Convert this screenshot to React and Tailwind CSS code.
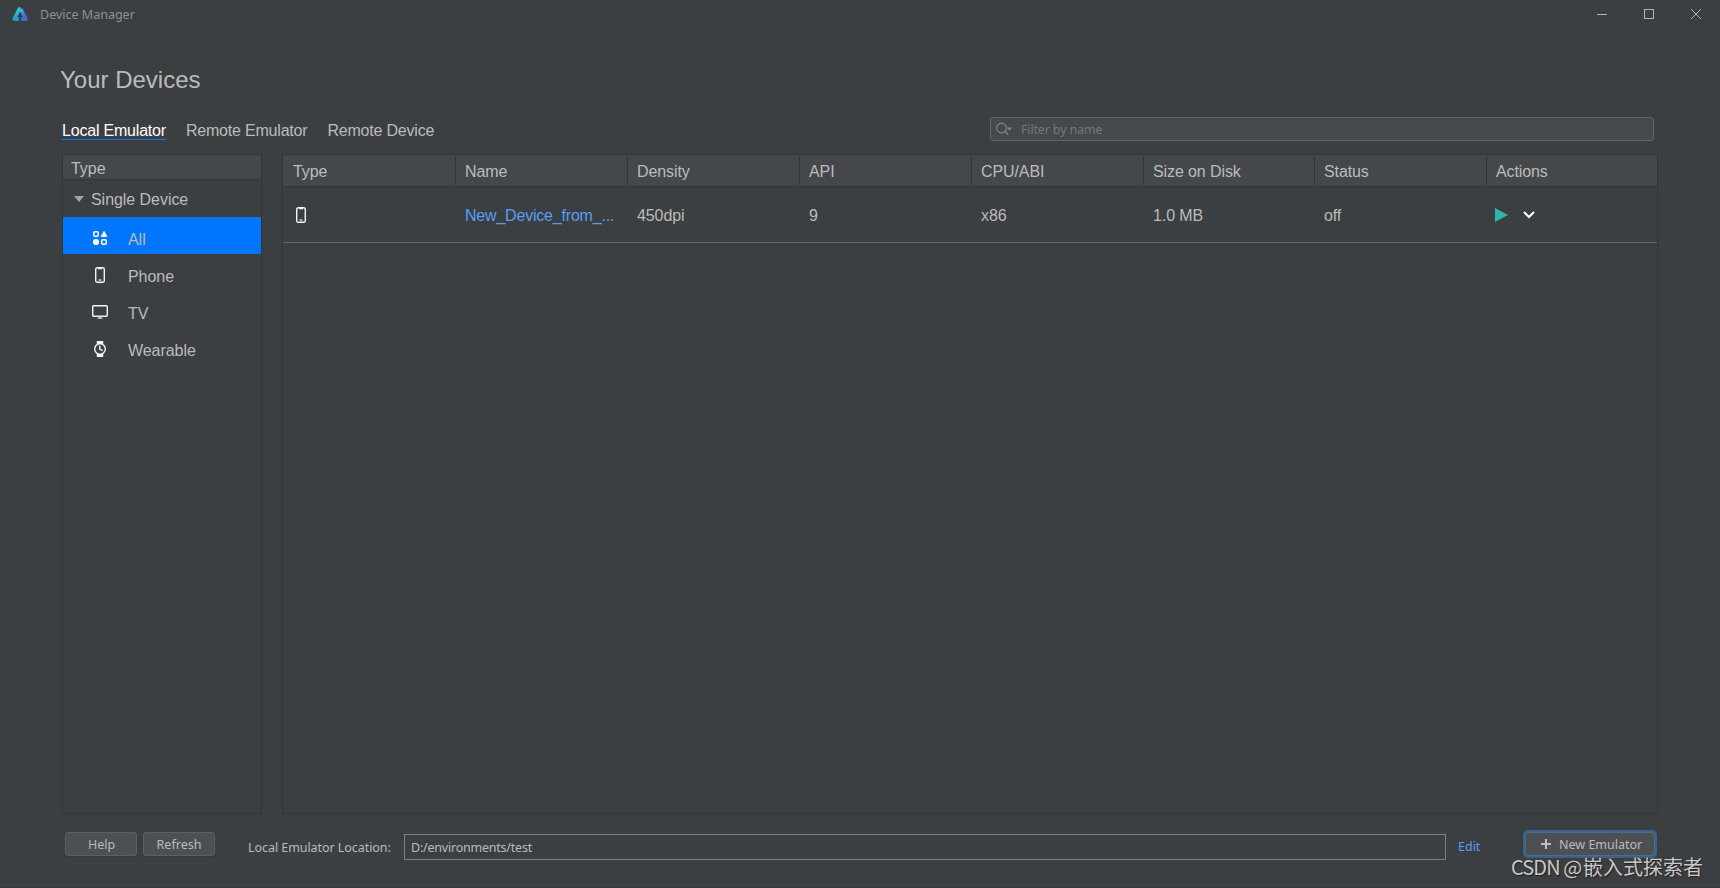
import React from 'react';

const heads = [
  ['Type', 'w-[173px] pl-[10px]'],
  ['Name', 'w-[172px] pl-[9px]'],
  ['Density', 'w-[172px] pl-[9px]'],
  ['API', 'w-[172px] pl-[9px]'],
  ['CPU/ABI', 'w-[172px] pl-[9px]'],
  ['Size on Disk', 'w-[171px] pl-[9px]'],
  ['Status', 'w-[172px] pl-[9px]'],
  ['Actions', 'w-[170px] pl-[9px]'],
];

const ui = "font-['Noto_Sans',sans-serif]";

function PhoneIcon() {
  return (
    <svg width="16" height="16" viewBox="0 0 16 16" fill="none">
      <rect x="3.7" y="0.7" width="8.6" height="14.6" rx="1.6" stroke="#f4f4f4" strokeWidth="1.4" />
      <path d="M6 1.7h4" stroke="#f4f4f4" strokeWidth="1.2" />
      <path d="M6.6 13h2.8" stroke="#c4c5c6" strokeWidth="1.6" />
    </svg>
  );
}

function AllIcon() {
  return (
    <svg width="16" height="16" viewBox="0 0 16 16" fill="none">
      <rect x="1.8" y="1.8" width="4.4" height="4.4" rx="1" stroke="#fff" strokeWidth="1.5" />
      <path d="M12 1.4 14.8 6.4H9.2Z" fill="#fff" stroke="#fff" strokeWidth="0.9" strokeLinejoin="round" />
      <circle cx="4" cy="12" r="3.1" fill="#fff" />
      <rect x="9.8" y="9.8" width="4.4" height="4.4" rx="1" stroke="#fff" strokeWidth="1.5" />
    </svg>
  );
}

function TvIcon() {
  return (
    <svg width="16" height="16" viewBox="0 0 16 16" fill="none">
      <rect x="0.7" y="1.8" width="14.6" height="10.4" rx="1" stroke="#f4f4f4" strokeWidth="1.4" />
      <path d="M6.5 13.2h3" stroke="#d8d8d8" strokeWidth="1.4" />
      <path d="M5.500 14.500h5" stroke="#b4b5b6" strokeWidth="1" />
    </svg>
  );
}

function WatchIcon() {
  return (
    <svg width="16" height="16" viewBox="0 0 16 16" fill="none">
      <path d="M4.8 0h6.4v3H4.8ZM4.8 13h6.4v3H4.8Z" fill="#f4f4f4" />
      <circle cx="8" cy="8" r="5.3" fill="#3c3f41" stroke="#f4f4f4" strokeWidth="1.4" />
      <path d="M7.800 4.800V8.200l2.800 1.500" stroke="#f4f4f4" strokeWidth="1.400" />
    </svg>
  );
}

function SideItem({ icon, label, active }) {
  return (
    <div className={`flex h-[37px] items-start pt-[13px] pl-[29px] ${active ? 'bg-[#0076ff]' : ''}`}>
      {icon}
      <span className="ml-5 leading-5">{label}</span>
    </div>
  );
}

export default function App() {
  return (
    <div className="relative flex h-[888px] w-[1720px] flex-col overflow-hidden border-b border-[#36393b] bg-[#3c3f41] font-['Liberation_Sans',sans-serif] text-[16px] text-[#bbbbbb]">
      <header className="flex h-[30px] shrink-0 items-center pb-[2px] pl-3">
        <svg width="16" height="14" viewBox="0 0 16 14" fill="none" strokeWidth="3.600" strokeLinejoin="round">
          <defs>
            <linearGradient id="logoLeft" gradientUnits="userSpaceOnUse" x1="2" y1="13" x2="9" y2="0">
              <stop offset="0" stopColor="#1f93c8" />
              <stop offset="1" stopColor="#35d3dc" />
            </linearGradient>
            <linearGradient id="logoRight" gradientUnits="userSpaceOnUse" x1="9" y1="2" x2="12" y2="9">
              <stop offset="0" stopColor="#35c0dc" />
              <stop offset="1" stopColor="#3b70d8" />
            </linearGradient>
          </defs>
          <path d="M9.200 12.100H13.900L8.700 2" stroke="url(#logoRight)" />
          <path d="M6.800 12.100H2.100L7.300 2H8.700" stroke="url(#logoLeft)" />
        </svg>
        <span className={`${ui} mt-[2px] ml-3 text-[12.5px] text-[#8f9091]`}>Device Manager</span>
        <div className="ml-auto flex items-center gap-[37px] pr-[19px]">
          <svg width="10" height="10" viewBox="0 0 10 10"><path d="M0 5.500h10" stroke="#b4b4b4" /></svg>
          <svg width="10" height="10" viewBox="0 0 10 10"><rect x="0.5" y="0.5" width="9" height="9" fill="none" stroke="#b4b4b4" /></svg>
          <svg width="10" height="10" viewBox="0 0 10 10"><path d="M0 0 10 10M10 0 0 10" stroke="#b4b4b4" /></svg>
        </div>
      </header>

      <h1 className="mt-[34px] ml-[60px] h-8 text-[24px] leading-8">Your Devices</h1>

      <div className="mt-[21px] flex h-[37px] shrink-0 pl-[62px] pr-[66px]">
        <nav className="flex items-start gap-5 pt-[4px] tracking-[-0.2px]">
          <span className="h-[19px] border-b border-[#0d7bf0] leading-5 text-white">Local Emulator</span>
          <span className="leading-5">Remote Emulator</span>
          <span className="leading-5">Remote Device</span>
        </nav>
        <div className="ml-auto flex h-6 w-[664px] items-center rounded-[3px] border border-[#646464] bg-[#45494a] pl-[5px]">
          <svg width="17" height="14" viewBox="0 0 17 14" fill="none">
            <circle cx="5.500" cy="6" r="4.900" stroke="#7f8b91" strokeWidth="1.100" />
            <path d="m9 9.500 3.200 3" stroke="#7f8b91" strokeWidth="1.300" />
            <path d="M11 5.500h5L13.500 8.500Z" fill="#7f8b91" />
          </svg>
          <span className={`${ui} mt-[2px] ml-[8px] text-[12.5px] tracking-[-0.15px] text-[#747879]`}>Filter by name</span>
        </div>
      </div>

      <main className="flex h-[660px] shrink-0 gap-[20px] pl-[62px]">
        <aside className="w-[200px] border border-[#323536] tracking-[-0.05px]">
          <div className="h-[25px] border-b border-[#323536] bg-[#45484a] pl-2 leading-[27px]">Type</div>
          <div className="flex h-[37px] items-center pl-[11px]">
            <svg width="10" height="6" viewBox="0 0 10 6"><path d="M0 0h10L5 6Z" fill="#a2a4a5" /></svg>
            <span className="ml-[7px] pt-[3px]">Single Device</span>
          </div>
          <SideItem active icon={<AllIcon />} label="All" />
          <SideItem icon={<PhoneIcon />} label="Phone" />
          <SideItem icon={<TvIcon />} label="TV" />
          <SideItem icon={<WatchIcon />} label="Wearable" />
        </aside>

        <section className="w-[1376px] border border-[#323536] tracking-[-0.1px]">
          <div className="flex h-8 border-b border-[#323536] bg-[#45484a] py-px">
            {heads.map(([label, box], i) => (
              <div key={label} className={`${box} shrink-0 leading-[31px] ${i < 7 ? 'border-r border-[#323536]' : ''}`}>{label}</div>
            ))}
          </div>
          <div className="flex h-14 items-center border-b border-[#646768]">
            <div className="w-[173px] pl-[10px]"><PhoneIcon /></div>
            <div className="w-[172px] pl-[9px] pt-[2px] tracking-[-0.2px] text-[#589df6]">New_Device_from_...</div>
            <div className="w-[172px] pl-[9px] pt-[2px]">450dpi</div>
            <div className="w-[172px] pl-[9px] pt-[2px]">9</div>
            <div className="w-[172px] pl-[9px] pt-[2px]">x86</div>
            <div className="w-[171px] pl-[9px] pt-[2px]">1.0 MB</div>
            <div className="w-[172px] pl-[9px] pt-[2px]">off</div>
            <div className="flex items-center gap-[15px] pt-px pl-[7px]">
              <svg width="14" height="14" viewBox="0 0 14 14"><path d="M1 0 14 7 1 14Z" fill="#30b4ab" /></svg>
              <svg width="12" height="8" viewBox="0 0 12 8"><path d="m1 1 5 5 5-5" fill="none" stroke="#fff" strokeWidth="2" /></svg>
            </div>
          </div>
        </section>
      </main>

      <footer className={`${ui} flex pl-[65px] pt-[18px] text-[12.5px]`}>
        <button className="h-6 w-[72px] rounded-[3px] border border-[#5e6060] bg-[#4c5052] pt-[2px] pl-px leading-5 shadow-[0_1px_1px_#36393b]">Help</button>
        <button className="ml-[6px] h-6 w-[72px] rounded-[3px] border border-[#5e6060] bg-[#4c5052] pt-[2px] leading-5 shadow-[0_1px_1px_#36393b]">Refresh</button>
        <span className="ml-[33px] w-[156px] pt-[7px] tracking-[-0.06px] whitespace-nowrap">Local Emulator Location:</span>
        <div className="mt-[2px] h-[26px] w-[1042px] border border-[#808080] pl-[6px] leading-[25px] tracking-[-0.22px]">D:/environments/test</div>
        <a className="ml-3 w-[65px] pt-[6px] text-[#589df6]">Edit</a>
        <button className="-mt-[2px] flex h-[28px] w-[134px] items-center rounded-[5px] border-2 border-[#3d6185] bg-[#4c5052] pl-[16px] shadow-[inset_0_0_0_1px_#466d94]">
          <svg width="10" height="10" viewBox="0 0 10 10"><path d="M5 0v10M0 5h10" stroke="#c0c0c0" strokeWidth="2" /></svg>
          <span className="mt-[2px] ml-[8px]">New Emulator</span>
        </button>
      </footer>

      <div className="absolute left-[1511px] top-[853px] flex whitespace-nowrap font-['Noto_Sans_CJK_SC',sans-serif] text-[20px] leading-[28px] text-[#c8c8c8] [text-shadow:1px_1px_1px_#202020]">
        <span className="w-[72px] tracking-[-0.9px] whitespace-pre">CSDN @</span>
        <span>嵌入式探索者</span>
      </div>
    </div>
  );
}
